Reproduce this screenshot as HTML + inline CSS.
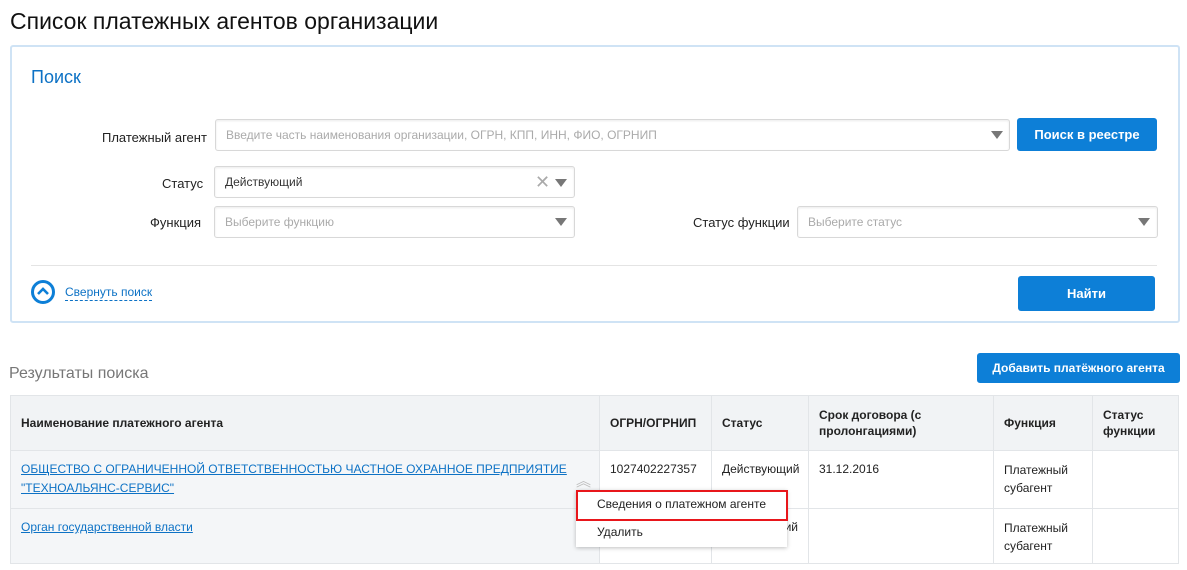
<!DOCTYPE html><html><head><meta charset="utf-8"><style>
*{box-sizing:border-box;margin:0;padding:0}
body{width:1187px;height:570px;background:#fff;font-family:"Liberation Sans",sans-serif;color:#222;position:relative;overflow:hidden}
.a{position:absolute;white-space:nowrap}
.inp{position:absolute;border:1px solid #d8d8d8;border-radius:3px;background:#fff;height:32px;font-size:12px;color:#aaa;padding:8px 10px;box-shadow:inset 0 1px 2px rgba(0,0,0,.08);white-space:nowrap}
.tri{position:absolute;width:0;height:0;border-left:6px solid transparent;border-right:6px solid transparent;border-top:8px solid #777}
.btn{position:absolute;background:#0d7fd7;color:#fff;border-radius:3px;font-size:13px;font-weight:bold;text-align:center;white-space:nowrap}
.lbl{position:absolute;font-size:13px;color:#222;white-space:nowrap}
table{table-layout:fixed;white-space:normal}
td{border:1px solid #e2e5e8;font-size:12px;vertical-align:top;padding:0 10px;overflow:hidden;white-space:normal;line-height:16px}
</style></head><body>
<div class="a" style="left:10px;top:8px;font-size:23px;color:#111">Список платежных агентов организации</div>
<div class="a" style="left:10px;top:45px;width:1170px;height:278px;border:2px solid #cfe3f5;border-radius:3px"></div>
<div class="a" style="left:31px;top:67px;font-size:18px;color:#0d72c5">Поиск</div>
<div class="lbl" style="left:102px;top:130px">Платежный агент</div>
<div class="inp" style="left:215px;top:119px;width:795px">Введите часть наименования организации, ОГРН, КПП, ИНН, ФИО, ОГРНИП</div>
<div class="tri" style="left:991px;top:131px"></div>
<div class="btn" style="left:1017px;top:118px;width:140px;height:33px;line-height:33px">Поиск в реестре</div>
<div class="lbl" style="left:162px;top:176px">Статус</div>
<div class="inp" style="left:214px;top:166px;width:361px;color:#333">Действующий</div>
<div class="a" style="left:535px;top:172px;font-size:18px;color:#aaa;line-height:20px">✕</div>
<div class="tri" style="left:555px;top:179px"></div>
<div class="lbl" style="left:150px;top:215px">Функция</div>
<div class="inp" style="left:214px;top:206px;width:361px">Выберите функцию</div>
<div class="tri" style="left:555px;top:218px"></div>
<div class="lbl" style="left:693px;top:215px">Статус функции</div>
<div class="inp" style="left:797px;top:206px;width:361px">Выберите статус</div>
<div class="tri" style="left:1138px;top:218px"></div>
<div class="a" style="left:31px;top:265px;width:1126px;height:1px;background:#e4e4e4"></div>
<div class="a" style="left:31px;top:280px;width:24px;height:24px;border:3px solid #0d7fd7;border-radius:50%"></div>
<svg class="a" style="left:31px;top:280px" width="24" height="24"><path d="M7 14 L12 9 L17 14" stroke="#0d7fd7" stroke-width="2.6" fill="none"/></svg>
<div class="a" style="left:65px;top:285px;font-size:12px;color:#0d72c5;border-bottom:1px dashed #0d72c5;line-height:15px">Свернуть поиск</div>
<div class="btn" style="left:1018px;top:276px;width:137px;height:35px;line-height:35px">Найти</div>
<div class="a" style="left:9px;top:365px;font-size:16px;color:#777">Результаты поиска</div>
<div class="btn" style="left:977px;top:353px;width:203px;height:30px;line-height:30px;font-size:12px">Добавить платёжного агента</div>
<table class="a" style="left:10px;top:395px;border-collapse:collapse;width:1168px;white-space:normal">
<colgroup><col style="width:589px"><col style="width:112px"><col style="width:97px"><col style="width:185px"><col style="width:99px"><col style="width:86px"></colgroup>
<tr style="height:55px;background:#f1f3f5;font-weight:bold"><td style="vertical-align:middle">Наименование платежного агента</td><td style="vertical-align:middle">ОГРН/ОГРНИП</td><td style="vertical-align:middle">Статус</td><td style="vertical-align:middle">Срок договора (с пролонгациями)</td><td style="vertical-align:middle">Функция</td><td style="vertical-align:middle">Статус функции</td></tr>
<tr style="height:58px"><td style="background:#f4f6f8;padding-top:9px;line-height:19px;overflow:visible"><div style="color:#0d72c5;text-decoration:underline;white-space:nowrap">ОБЩЕСТВО С ОГРАНИЧЕННОЙ ОТВЕТСТВЕННОСТЬЮ ЧАСТНОЕ ОХРАННОЕ ПРЕДПРИЯТИЕ<br>"ТЕХНОАЛЬЯНС-СЕРВИС"</div></td><td style="padding-top:10px">1027402227357</td><td style="padding-top:10px">Действующий</td><td style="padding-top:10px">31.12.2016</td><td style="padding-top:10px;line-height:18px">Платежный<br>субагент</td><td></td></tr>
<tr style="height:55px"><td style="background:#f4f6f8;padding-top:10px"><span style="color:#0d72c5;text-decoration:underline">Орган государственной власти</span></td><td></td><td style="padding-top:10px;text-align:right">ий</td><td></td><td style="padding-top:10px;line-height:18px">Платежный<br>субагент</td><td></td></tr>
</table>
<div class="a" style="left:576px;top:470px;font-size:15px;color:#bbb">︽</div>
<div class="a" style="left:576px;top:490px;width:211px;height:57px;background:#fff;box-shadow:0 1px 4px rgba(0,0,0,.25)"></div>
<div class="a" style="left:576px;top:490px;width:212px;height:31px;border:2px solid #e8161b"></div>
<div class="a" style="left:597px;top:497px;font-size:12px">Сведения о платежном агенте</div>
<div class="a" style="left:597px;top:525px;font-size:12px">Удалить</div>
</body></html>
